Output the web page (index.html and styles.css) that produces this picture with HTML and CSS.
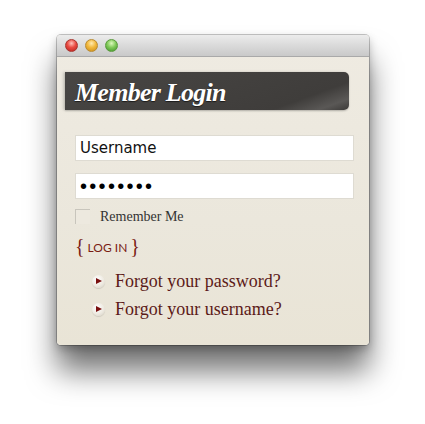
FILE: index.html
```html
<!DOCTYPE html>
<html>
<head>
<meta charset="utf-8">
<link rel="stylesheet" href="styles.css">
</head>
<body>
<div class="window">
  <div class="titlebar">
    <span class="light red"></span>
    <span class="light yellow"></span>
    <span class="light green"></span>
  </div>
  <div class="content">
    <div class="banner"><h1>Member Login</h1></div>
    <form class="form">
      <input class="field" type="text" value="Username">
      <input class="field pass" type="password" value="password">
      <label class="remember"><span class="check"></span>Remember Me</label>
      <div class="login"><span class="brace">{</span><span class="login-text">LOG IN</span><span class="brace">}</span></div>
    </form>
    <ul class="links">
      <li><span class="arrow"></span>Forgot your password?</li>
      <li><span class="arrow"></span>Forgot your username?</li>
    </ul>
  </div>
</div>
</body>
</html>
```
FILE: styles.css
```css
html, body {
  margin: 0;
  padding: 0;
  background: #ffffff;
}
body {
  padding-top: 35px;
  padding-left: 57px;
  min-height: 424px;
  box-sizing: border-box;
}
.window {
  width: 312px;
  height: 310px;
  border-radius: 4px;
  background: linear-gradient(180deg, #efebe2 0%, #ebe7dc 60%, #e9e4d6 100%);
  box-shadow: 0 0 0 1px rgba(0,0,0,0.22), 0 26px 30px rgba(0,0,0,0.55), 0 4px 10px rgba(0,0,0,0.25);
  display: flex;
  flex-direction: column;
  overflow: hidden;
}
.titlebar {
  height: 22px;
  flex: none;
  background: linear-gradient(180deg, #ececec 0%, #dadada 50%, #c9c9c9 100%);
  border-bottom: 1px solid #a9a9a9;
  display: flex;
  align-items: center;
  gap: 7px;
  padding-left: 8px;
  box-sizing: border-box;
}
.light {
  width: 13px;
  height: 13px;
  border-radius: 50%;
  box-sizing: border-box;
}
.red { background: radial-gradient(circle at 50% 30%, #ffc2bb 0%, #ea4b42 45%, #b9201c 100%); border: 1px solid #a8352f; }
.yellow { background: radial-gradient(circle at 50% 30%, #ffeab0 0%, #f2b93c 45%, #c98a16 100%); border: 1px solid #b98a30; }
.green { background: radial-gradient(circle at 50% 30%, #dcf8bd 0%, #82cb5a 45%, #3f9128 100%); border: 1px solid #5a9a3d; }
.content {
  flex: 1;
  padding: 15px 20px 0 8px;
  display: flex;
  flex-direction: column;
}
.banner {
  height: 38px;
  background: linear-gradient(160deg, #484644 0%, #3f3d3b 80%, #5a5856 92%, #3c3a38 100%);
  border-radius: 0 5px 5px 0;
  box-shadow: -2px 0 3px rgba(0,0,0,0.15), 0 1px 2px rgba(0,0,0,0.2);
  display: flex;
  align-items: center;
  padding-left: 10px;
  padding-top: 3px;
  box-sizing: border-box;
}
.banner h1 {
  margin: 0;
  font-family: "Liberation Serif", "DejaVu Serif", serif;
  font-style: italic;
  font-weight: bold;
  font-size: 26px;
  letter-spacing: -0.75px;
  color: #ffffff;
  text-shadow: 0 1px 1px rgba(0,0,0,0.6);
}
.form {
  margin: 0;
  padding: 25px 0 0 10px;
  display: flex;
  flex-direction: column;
}
.field {
  width: 279px;
  height: 26px;
  box-sizing: border-box;
  border: 1px solid #dedbd2;
  background: #ffffff;
  padding: 0 4px;
  font-family: "DejaVu Sans", sans-serif;
  font-size: 15px;
  color: #111;
  outline: none;
  margin: 0 0 12px 0;
}
.pass {
  font-family: "Liberation Sans", sans-serif;
  font-size: 20px;
  letter-spacing: 2.3px;
  margin-bottom: 9px;
  color: #000;
}
.remember {
  display: flex;
  align-items: center;
  gap: 10px;
  font-family: "Liberation Serif", serif;
  font-size: 14px;
  color: #333;
  height: 15px;
  padding-top: 1px;
}
.check {
  width: 15px;
  height: 15px;
  box-sizing: border-box;
  border-top: 1px solid #c8c5bc;
  border-left: 1px solid #c8c5bc;
  background: #ede9df;
}
.login {
  margin-top: 12px;
  display: flex;
  align-items: center;
  gap: 3px;
  color: #7a1c14;
  height: 20px;
}
.brace {
  font-family: "Liberation Serif", serif;
  font-size: 20px;
}
.login-text {
  font-family: "Lato", "DejaVu Sans", sans-serif;
  font-size: 12px;
  padding-top: 2px;
}
.links {
  list-style: none;
  margin: 17px 0 0 0;
  padding: 0 0 0 27px;
  display: flex;
  flex-direction: column;
  gap: 12px;
}
.links li {
  display: flex;
  align-items: center;
  gap: 10px;
  font-family: "Liberation Serif", serif;
  font-size: 18px;
  color: #5c1a18;
  height: 16px;
}
.arrow {
  width: 13px;
  height: 13px;
  border-radius: 50%;
  background: radial-gradient(circle at 40% 35%, #ffffff 0%, #eeeae1 55%, #d2cdc2 100%);
  box-shadow: 0 1px 1px rgba(0,0,0,0.12);
  position: relative;
  flex: none;
}
.arrow::after {
  content: "";
  position: absolute;
  left: 4px;
  top: 3px;
  border-left: 6px solid #7a1010;
  border-top: 3.5px solid transparent;
  border-bottom: 3.5px solid transparent;
}
```
